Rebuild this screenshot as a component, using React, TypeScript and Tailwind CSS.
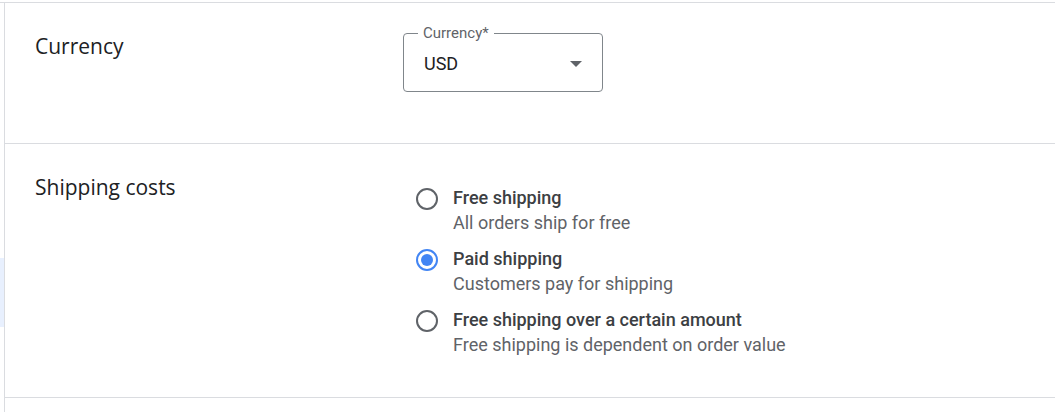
import React from 'react';

const options = [
  { title: 'Free shipping', desc: 'All orders ship for free', checked: false },
  { title: 'Paid shipping', desc: 'Customers pay for shipping', checked: true },
  {
    title: 'Free shipping over a certain amount',
    desc: 'Free shipping is dependent on order value',
    checked: false,
  },
];

const Radio = ({ checked }: { checked: boolean }) => (
  <span
    className={
      checked
        ? 'mt-[3px] flex h-[22px] w-[22px] shrink-0 items-center justify-center rounded-full border-2 border-[#4285f4]'
        : 'mt-[3px] flex h-[22px] w-[22px] shrink-0 items-center justify-center rounded-full border-2 border-[#5f6368]'
    }
  >
    {checked && <span className="h-[12px] w-[12px] rounded-full bg-[#4285f4]" />}
  </span>
);

const CurrencySelect = () => (
  <div className="relative flex h-[59px] w-[200px] items-center justify-between rounded-[4px] border border-[#80868b] pl-[20px] pr-[20px] pt-[2px]">
    <span className="absolute left-[14px] top-[-8px] bg-white px-[5px] text-[15px] leading-[15px] text-[#5f6368]">
      Currency*
    </span>
    <span className="text-[18px] text-[#202124]">USD</span>
    <svg width="12" height="6" viewBox="0 0 12 6" className="mt-[1px]">
      <polygon points="0,0 12,0 6,6" fill="#5f6368" />
    </svg>
  </div>
);

export default function App() {
  return (
    <div className="h-[412px] w-[1055px] overflow-hidden bg-white font-['Roboto',sans-serif]">
      <div className="h-[2px]" />
      <div className="flex h-[410px] border-t border-[#dadce0]">
        <div className="w-[4px] shrink-0 pt-[255px]">
          <div className="h-[69px] w-[4px] bg-[#e8f0fe]" />
        </div>
        <div className="flex-1 border-l border-[#dadce0]">
          <section className="flex h-[141px] border-b border-[#dadce0] pl-[30px]">
            <div className="w-[368px] pt-[30px]">
              <h2 className="font-['Open_Sans',sans-serif] text-[21px] leading-[26px] text-[#202124]">
                Currency
              </h2>
            </div>
            <div className="pt-[30px]">
              <CurrencySelect />
            </div>
          </section>
          <section className="flex h-[254px] border-b border-[#dadce0] pl-[30px]">
            <div className="w-[368px] pt-[30px]">
              <h2 className="font-['Open_Sans',sans-serif] text-[21px] leading-[26px] text-[#202124]">
                Shipping costs
              </h2>
            </div>
            <div className="flex flex-col gap-[11px] pl-[13px] pt-[41px]">
              {options.map((o) => (
                <label key={o.title} className="flex gap-[15px]">
                  <Radio checked={o.checked} />
                  <div className="flex flex-col">
                    <span className="text-[18px] font-medium leading-[26px] text-[#3c4043]">
                      {o.title}
                    </span>
                    <span className="text-[18px] leading-[24px] text-[#5f6368]">{o.desc}</span>
                  </div>
                </label>
              ))}
            </div>
          </section>
        </div>
      </div>
    </div>
  );
}
